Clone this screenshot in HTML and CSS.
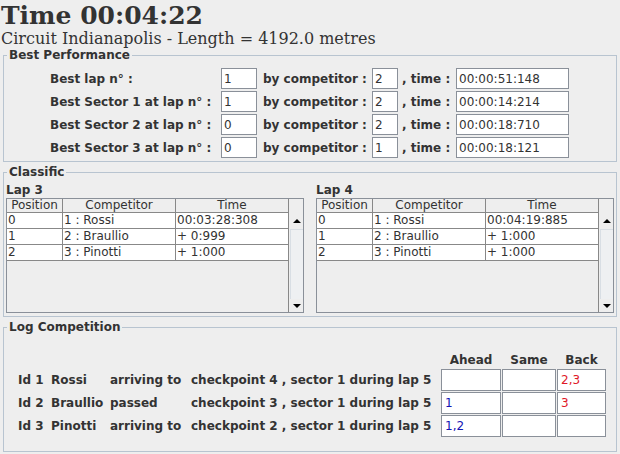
FILE: index.html
```html
<!DOCTYPE html>
<html>
<head>
<meta charset="utf-8">
<title>Race monitor</title>
<link rel="stylesheet" href="styles.css">
</head>
<body>
<div class="app">
  <h1 class="clock">Time 00:04:22</h1>
  <p class="circuit">Circuit Indianapolis - Length = 4192.0 metres</p>

  <fieldset class="group">
    <legend>Best Performance</legend>
    <div class="best-grid">
      <span class="lbl">Best lap n° :</span><span class="field">1</span><span class="lbl by">by competitor :</span><span class="field">2</span><span class="lbl tm">, time :</span><span class="field">00:00:51:148</span>
      <span class="lbl">Best Sector 1 at lap n° :</span><span class="field">1</span><span class="lbl by">by competitor :</span><span class="field">2</span><span class="lbl tm">, time :</span><span class="field">00:00:14:214</span>
      <span class="lbl">Best Sector 2 at lap n° :</span><span class="field">0</span><span class="lbl by">by competitor :</span><span class="field">2</span><span class="lbl tm">, time :</span><span class="field">00:00:18:710</span>
      <span class="lbl">Best Sector 3 at lap n° :</span><span class="field">0</span><span class="lbl by">by competitor :</span><span class="field">1</span><span class="lbl tm">, time :</span><span class="field">00:00:18:121</span>
    </div>
  </fieldset>

  <fieldset class="group">
    <legend>Classific</legend>
    <div class="laps">
      <div class="lap">
        <div class="lap-title">Lap 3</div>
        <div class="scrollpane">
          <div class="table">
            <div class="thead"><span class="th">Position</span><span class="th">Competitor</span><span class="th">Time</span></div>
            <div class="tr"><span class="td">0</span><span class="td">1 : Rossi</span><span class="td">00:03:28:308</span></div>
            <div class="tr"><span class="td">1</span><span class="td">2 : Braullio</span><span class="td">+ 0:999</span></div>
            <div class="tr"><span class="td">2</span><span class="td">3 : Pinotti</span><span class="td">+ 1:000</span></div>
          </div>
          <div class="sbar">
            <div class="corner"></div>
            <div class="sb-btn"><span class="arrow up"></span></div>
            <div class="sb-track"></div>
            <div class="sb-btn down-btn"><span class="arrow down"></span></div>
          </div>
        </div>
      </div>
      <div class="lap">
        <div class="lap-title">Lap 4</div>
        <div class="scrollpane">
          <div class="table">
            <div class="thead"><span class="th">Position</span><span class="th">Competitor</span><span class="th">Time</span></div>
            <div class="tr"><span class="td">0</span><span class="td">1 : Rossi</span><span class="td">00:04:19:885</span></div>
            <div class="tr"><span class="td">1</span><span class="td">2 : Braullio</span><span class="td">+ 1:000</span></div>
            <div class="tr"><span class="td">2</span><span class="td">3 : Pinotti</span><span class="td">+ 1:000</span></div>
          </div>
          <div class="sbar">
            <div class="corner"></div>
            <div class="sb-btn"><span class="arrow up"></span></div>
            <div class="sb-track"></div>
            <div class="sb-btn down-btn"><span class="arrow down"></span></div>
          </div>
        </div>
      </div>
    </div>
  </fieldset>

  <fieldset class="group">
    <legend>Log Competition</legend>
    <div class="log-grid">
      <span></span><span></span><span></span><span></span>
      <span class="hd w-ahead">Ahead</span><span class="hd w-same">Same</span><span class="hd w-back">Back</span>

      <span class="lt">Id 1</span><span class="lt">Rossi</span><span class="lt">arriving to</span><span class="lt">checkpoint 4 , sector 1 during lap 5</span>
      <span class="box w-ahead"></span><span class="box w-same"></span><span class="box w-back back">2,3</span>

      <span class="lt">Id 2</span><span class="lt">Braullio</span><span class="lt">passed</span><span class="lt">checkpoint 3 , sector 1 during lap 5</span>
      <span class="box w-ahead ahead">1</span><span class="box w-same"></span><span class="box w-back back">3</span>

      <span class="lt">Id 3</span><span class="lt">Pinotti</span><span class="lt">arriving to</span><span class="lt">checkpoint 2 , sector 1 during lap 5</span>
      <span class="box w-ahead ahead">1,2</span><span class="box w-same"></span><span class="box w-back"></span>
    </div>
  </fieldset>
</div>
</body>
</html>
```

FILE: styles.css
```css
* { box-sizing: border-box; }
html, body { margin: 0; padding: 0; }
body {
  width: 620px;
  height: 454px;
  overflow: hidden;
  background: #eeeeee;
  font-family: "DejaVu Sans", sans-serif;
  font-size: 12px;
  color: #333333;
}

.clock {
  margin: 0;
  padding: 1px 0 0 1px;
  height: 30px;
  font-family: "DejaVu Serif", serif;
  font-weight: bold;
  font-size: 25px;
  line-height: 29px;
  color: #333333;
}
.circuit {
  margin: 0;
  padding-left: 1px;
  height: 18px;
  font-family: "DejaVu Serif", serif;
  font-size: 16px;
  line-height: 18px;
  color: #333333;
}

.group {
  margin: 0 3px;
  padding: 0 2px;
  border: 1px solid #b8c4d0;
  min-width: 0;
}
.group + .group { margin-top: 3px; }
.group legend {
  margin-left: 1px;
  padding: 0 2px;
  font-weight: bold;
  font-size: 12px;
  line-height: 14px;
  color: #333333;
}

/* Best performance */
.best-grid {
  display: grid;
  grid-template-columns: 171px 36px 115px 26px 58px 113px;
  grid-auto-rows: 21px;
  row-gap: 2px;
  margin: 6px 0 3px 44px;
}
.lbl {
  display: flex;
  align-items: center;
  font-weight: bold;
  white-space: nowrap;
}
.lbl.by { padding-left: 6px; }
.lbl.tm { padding-left: 4px; }
.field {
  display: flex;
  align-items: center;
  padding: 0 2px;
  background: #ffffff;
  border: 1px solid #8a9099;
  white-space: nowrap;
  overflow: hidden;
}

/* Classific */
.laps {
  display: grid;
  grid-template-columns: 298px 298px;
  column-gap: 12px;
  padding-bottom: 3px;
}
.lap-title {
  margin-top: 4px;
  font-weight: bold;
  line-height: 15px;
}
.scrollpane {
  display: grid;
  grid-template-columns: 281px 15px;
  height: 115px;
  border: 1px solid #8a9099;
}
.table {
  display: flex;
  flex-direction: column;
}
.thead, .tr {
  display: grid;
  grid-template-columns: 56px 113px 112px;
}
.thead { height: 14px; }
.tr { height: 16px; background: #ffffff; }
.th, .td {
  border-bottom: 1px solid #888888;
  white-space: nowrap;
  overflow: hidden;
}
.th:not(:last-child), .td:not(:last-child) { border-right: 1px solid #888888; }
.th {
  text-align: center;
  line-height: 13px;
}
.td {
  padding-left: 1px;
  line-height: 15px;
}

.sbar {
  display: flex;
  flex-direction: column;
  border-left: 1px solid #888888;
}
.corner { height: 14px; }
.sb-btn {
  height: 16px;
  display: flex;
  align-items: center;
  justify-content: center;
}
.sb-btn.down-btn { height: 13px; }
.sb-track {
  flex: 1;
  margin-left: 1px;
  border-left: 1px solid #d8dee4;
  border-top: 1px solid #d8dee4;
  background: #eef0f2;
}
.arrow {
  width: 0;
  height: 0;
  border-left: 4px solid transparent;
  border-right: 4px solid transparent;
  margin-left: 1px;
}
.arrow.up { border-bottom: 4px solid #000000; }
.arrow.down { border-top: 4px solid #000000; }

/* Log competition */
.log-grid {
  display: grid;
  grid-template-columns: 33px 59px 81px 250px 61px 55px 49px;
  grid-template-rows: 16px 22px 22px 22px;
  row-gap: 1px;
  margin: 18px 0 14px 12px;
}
.hd {
  font-weight: bold;
  text-align: center;
  line-height: 16px;
}
.lt {
  display: flex;
  align-items: center;
  font-weight: bold;
  white-space: nowrap;
}
.box {
  display: flex;
  align-items: center;
  padding-left: 3px;
  background: #ffffff;
  border: 1px solid #8a9099;
}
.w-ahead { width: 60px; }
.w-same { width: 54px; }
.w-back { width: 49px; }
.ahead { color: #1414b4; }
.back { color: #e01828; }
```
